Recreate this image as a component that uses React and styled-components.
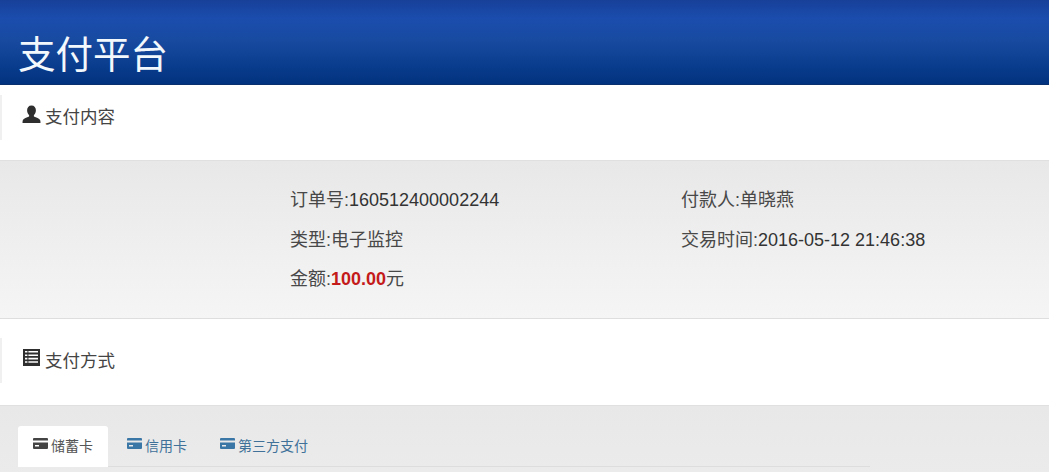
import React from "react";
import styled, { createGlobalStyle } from "styled-components";

const GlobalStyle = createGlobalStyle`
	html, body {
		margin: 0;
		padding: 0;
		background: #fff;
		overflow: hidden;
	}
	body {
		font-family: "Liberation Sans", "Noto Sans CJK SC", sans-serif;
		color: #333;
	}
`;

const Page = styled.div`
	width: 1049px;
	height: 472px;
	overflow: hidden;
`;

const Header = styled.header`
	height: 85px;
	box-sizing: border-box;
	padding: 30px 0 0 18px;
	background: linear-gradient(to bottom, #174099 0%, #1b4dae 22%, #174a9f 50%, #00327f 100%);
	border-bottom: 1px solid #0a2f6e;
`;

const Title = styled.h1`
	margin: 0;
	font-size: 37.5px;
	line-height: 50px;
	font-weight: 400;
	color: #f2f8fc;
`;

const SectionBar = styled.div`
	height: ${(props) => props.height}px;
	box-sizing: border-box;
	padding: ${(props) => props.top}px 0 0 22px;
	background: #fff;
	display: flex;
	align-items: flex-start;
	gap: ${(props) => props.gap}px;
	font-size: 17.5px;
	line-height: 26px;
	color: #444;
	border-bottom: 1px solid #e0e0e0;
	position: relative;

	&::before {
		content: "";
		position: absolute;
		left: 0;
		top: ${(props) => props.notch}px;
		width: 2px;
		height: 45px;
		background: #f0f0f0;
	}
`;

const BarIcon = styled.svg`
	width: ${(props) => props.size}px;
	height: ${(props) => props.size}px;
	flex: none;
	margin-top: ${(props) => props.offset}px;
	margin-left: ${(props) => props.inset}px;
	fill: #2e2e2e;
`;

const SummaryPanel = styled.section`
	height: 158px;
	box-sizing: border-box;
	padding: 20px 0 0 290px;
	background: linear-gradient(to bottom, #e8e8e8 0%, #f5f5f5 100%);
	border-bottom: 1px solid #dedede;
	display: grid;
	grid-template-columns: 391px 1fr;
	grid-auto-rows: 39.5px;
	font-size: 18px;
	line-height: 39.5px;
	color: #333;
`;

const SummaryItem = styled.div`
	white-space: nowrap;
`;

const Label = styled.span`
	color: #484848;
`;

const Amount = styled.strong`
	color: #c41a1a;
	font-weight: 700;
`;

const TabsPanel = styled.section`
	height: 66px;
	box-sizing: border-box;
	padding: 20px 0 0 18px;
	background: linear-gradient(to bottom, #e8e8e8 0%, #ebebeb 100%);
`;

const TabList = styled.nav`
	display: flex;
	width: 852px;
	height: 41px;
	box-sizing: border-box;
	border-bottom: 1px solid #dddddd;
`;

const Tab = styled.a`
	height: 41px;
	box-sizing: border-box;
	width: ${(props) => props.width}px;
	padding: 0 0 4px ${(props) => (props.active ? 15 : 19)}px;
	display: flex;
	align-items: center;
	gap: 3px;
	font-size: 14px;
	color: ${(props) => (props.active ? "#555555" : "#3f7199")};
	background: ${(props) => (props.active ? "#ffffff" : "transparent")};
	border-radius: 3px 3px 0 0;
`;

const CardIcon = styled.svg`
	width: 15px;
	height: 11px;
	flex: none;
	margin-top: -2px;
	fill: ${(props) => (props.active ? "#444444" : "#3a76a6")};
`;

const UserGlyph = () => (
	<BarIcon viewBox="0 0 19 19" size={19} offset={1} inset={0}>
		<path d="M9.5 0.5c-2.9 0-4.4 2.1-4.4 4.8 0 2 .8 3.8 2 4.8v1.5c-2.2 1.1-5.6 1.9-6.2 3.4-.3.8-.4 1.8-.4 3h18c0-1.2-.1-2.2-.4-3-.6-1.5-4-2.3-6.2-3.4v-1.5c1.2-1 2-2.8 2-4.8 0-2.7-1.5-4.8-4.4-4.8z" />
	</BarIcon>
);

const ListGlyph = () => (
	<BarIcon viewBox="0 0 17 17" size={17} offset={1} inset={1}>
		<path fillRule="evenodd" d="M0 0h17v17H0z M2 2v1.6h2.4V2z M5.4 2v1.6H15V2z M2 5.4V7h2.4V5.4z M5.4 5.4V7H15V5.4z M2 8.8v1.6h2.4V8.8z M5.4 8.8v1.6H15V8.8z M2 12.2v1.6h2.4v-1.6z M5.4 12.2v1.6H15v-1.6z" />
	</BarIcon>
);

const CardGlyph = ({ active }) => (
	<CardIcon active={active} viewBox="0 0 15 11">
		<path fillRule="evenodd" d="M1 0h13a1 1 0 0 1 1 1v1.5H0V1a1 1 0 0 1 1-1z M0 4.5h15V10a1 1 0 0 1-1 1H1a1 1 0 0 1-1-1z M2 7v1.5h4V7z" />
	</CardIcon>
);

const tabs = [
	{ name: "储蓄卡", width: 90, active: true },
	{ name: "信用卡", width: 93 },
	{ name: "第三方支付", width: 120 },
];

const App = () => {
	return (
		<Page>
			<GlobalStyle />
			<Header>
				<Title>支付平台</Title>
			</Header>
			<SectionBar height={76} top={19} notch={10} gap={4}>
				<UserGlyph />
				<span>支付内容</span>
			</SectionBar>
			<SummaryPanel>
				<SummaryItem>
					<Label>订单号:</Label>160512400002244
				</SummaryItem>
				<SummaryItem>
					<Label>付款人:单晓燕</Label>
				</SummaryItem>
				<SummaryItem>
					<Label>类型:电子监控</Label>
				</SummaryItem>
				<SummaryItem>
					<Label>交易时间:</Label>2016-05-12 21:46:38
				</SummaryItem>
				<SummaryItem>
					<Label>金额:</Label>
					<Amount>100.00</Amount>
					<Label>元</Label>
				</SummaryItem>
			</SummaryPanel>
			<SectionBar height={87} top={29} notch={19} gap={5}>
				<ListGlyph />
				<span>支付方式</span>
			</SectionBar>
			<TabsPanel>
				<TabList>
					{tabs.map((tab) => (
						<Tab key={tab.name} width={tab.width} active={tab.active}>
							<CardGlyph active={tab.active} />
							{tab.name}
						</Tab>
					))}
				</TabList>
			</TabsPanel>
		</Page>
	);
};

export default App;
